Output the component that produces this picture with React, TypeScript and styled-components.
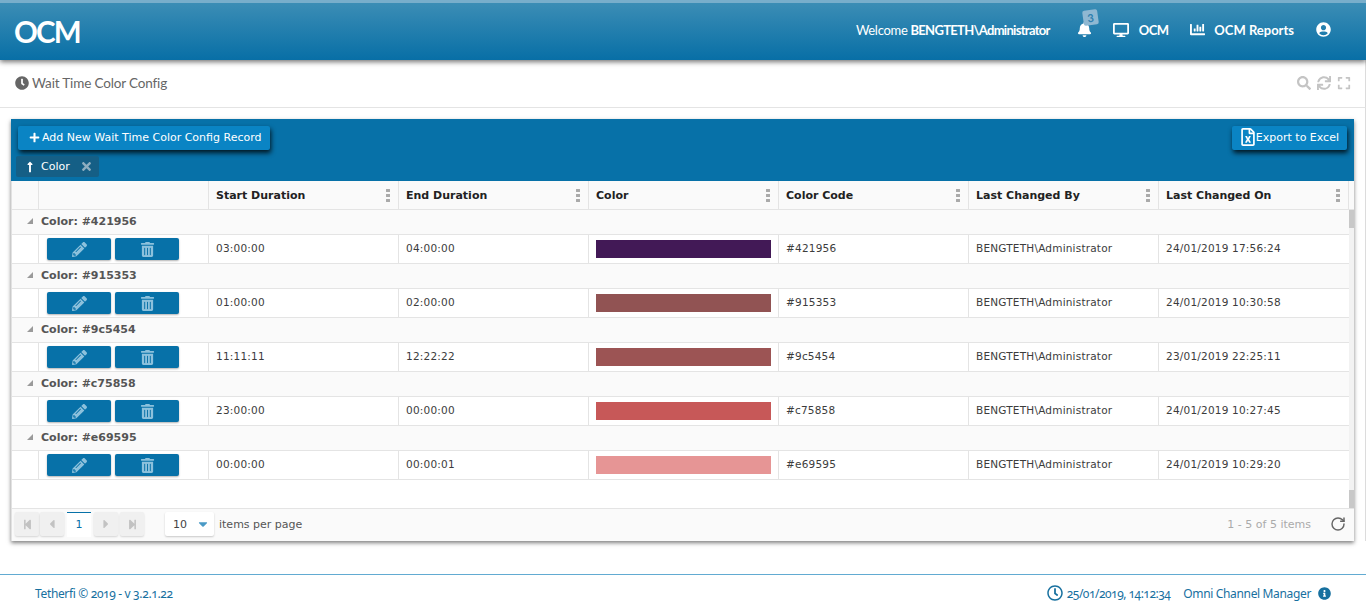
import React from 'react'
import styled, { createGlobalStyle } from 'styled-components'
import {
    FaBell, FaDesktop, FaChartBar, FaUserCircle, FaClock, FaRegClock, FaInfoCircle, FaSearch, FaSync,
    FaExpand, FaPlus, FaRegFileExcel, FaPencilAlt, FaTrashAlt, FaStepBackward, FaStepForward, FaCaretLeft,
    FaCaretRight, FaCaretDown, FaTimes, FaLongArrowAltUp
} from 'react-icons/fa'
import { RotateCw } from 'lucide-react'

const GlobalStyle = createGlobalStyle`
    html, body { margin: 0; padding: 0; background: #fff; }
    * { box-sizing: border-box; }
`

const HUMANIST = `Lato, "Open Sans", sans-serif`
const OLDSTYLE = `"Noto Sans", Lato, sans-serif`
const GRID_FONT = `"DejaVu Sans", Verdana, sans-serif`
const COLUMNS = '27px 170px 190px 190px 190px 190px 190px 1fr'

const Page = styled.div`
    width: 1366px;
    height: 613px;
    display: flex;
    flex-direction: column;
    overflow: hidden;
    position: relative;
`

const Header = styled.header`
    height: 60px;
    flex: none;
    display: flex;
    align-items: center;
    justify-content: space-between;
    padding: 3px 35px 0 14px;
    color: #fff;
    border-top: 3px solid #78aecb;
    background: linear-gradient(#3b8db5, #086fa6);
    box-shadow: 0 2px 5px rgba(0, 0, 0, 0.55);
    position: relative;
    z-index: 2;
    font-family: ${HUMANIST};
`

const Logo = styled.div`
    font-size: 29.5px;
    font-weight: 700;
    letter-spacing: -1.8px;
    margin-top: -3px;
`

const Nav = styled.nav`
    display: flex;
    align-items: center;
    font-size: 13px;
    font-weight: 700;
    margin-top: -7px;
`

const Welcome = styled.span`
    font-size: 13px;
    font-weight: 400;
    margin-right: 27px;
    letter-spacing: -0.3px;
    b { font-weight: 700; font-size: 13px; letter-spacing: -0.7px; }
`

const BellBox = styled.span`
    position: relative;
    display: inline-flex;
    margin-right: 21px;
    font-size: 15px;
`

const Badge = styled.span`
    position: absolute;
    left: 6px;
    top: -12px;
    width: 15px;
    height: 15px;
    border-radius: 2px;
    background: #8fb8d2;
    color: #2f7fae;
    font-size: 11px;
    font-weight: 700;
    display: flex;
    align-items: center;
    justify-content: center;
    transform: rotate(-8deg);
`

const NavItem = styled.span<{ $gap: number, $tight?: boolean }>`
    display: inline-flex;
    align-items: center;
    gap: ${p => p.$gap}px;
    margin-right: 22px;
    letter-spacing: ${p => p.$tight ? '-0.6px' : 'normal'};
    &:last-child { margin-right: 0; }
`

const TitleBar = styled.div`
    height: 48px;
    flex: none;
    display: flex;
    align-items: center;
    justify-content: space-between;
    padding: 0 14px 1px 15px;
    border-bottom: 1px solid #e4e4e4;
    border-right: 1px solid #dcdcdc;
`

const Title = styled.h1`
    margin: 0;
    display: flex;
    align-items: center;
    gap: 3px;
    font: 400 13.5px ${HUMANIST};
    letter-spacing: -0.15px;
    color: #666;
    svg { color: #666; font-size: 14px; }
`

const TitleTools = styled.div`
    display: flex;
    gap: 6px;
    color: #c4c4c4;
    font-size: 14px;
    align-items: center;
`

const Content = styled.main`
    flex: 1;
    padding: 11px 11px 0 11px;
    border-right: 1px solid #dcdcdc;
`

const Panel = styled.section`
    width: 1343px;
    height: 422px;
    display: flex;
    flex-direction: column;
    box-shadow: 0 2px 4px rgba(0, 0, 0, 0.5);
    border-left: 1px solid #e2e2e2;
    font-family: ${GRID_FONT};
`

const Toolbar = styled.div`
    height: 62px;
    flex: none;
    background: #0771a8;
    margin-left: -1px;
    padding: 7px 7px 0 5px;
    display: flex;
    flex-direction: column;
    gap: 6px;
`

const ToolbarRow = styled.div`
    display: flex;
    justify-content: space-between;
`

const ActionButton = styled.button`
    height: 24px;
    border: 0;
    border-radius: 2px;
    background: #0a84c4;
    color: #fff;
    font: 400 11px ${GRID_FONT};
    display: inline-flex;
    align-items: center;
    padding: 0 8px 2px 11px;
    gap: 2px;
    margin-left: 2px;
    box-shadow: 1px 3px 5px rgba(0, 0, 0, 0.8);
`

const ExportButton = styled(ActionButton)`
    padding-left: 9px;
    gap: 1px;
    svg { width: 14px; height: 18px; }
`

const GroupChip = styled.div`
    width: 83px;
    height: 21px;
    background: #155f86;
    border-radius: 2px;
    color: #fff;
    font-size: 11px;
    display: flex;
    align-items: center;
    padding: 0 6px 0 8px;
    svg:first-child { font-size: 12px; margin-right: 5px; }
    svg:last-child { margin-left: auto; color: #8faec0; font-size: 13px; }
`

const HeadRow = styled.div`
    display: grid;
    grid-template-columns: ${COLUMNS};
    height: 29px;
    flex: none;
    padding-right: 5px;
    background: #fafafa;
    border-bottom: 1px solid #e4e4e4;
`

const HeadCell = styled.div`
    display: flex;
    align-items: center;
    justify-content: space-between;
    padding: 0 7px 0 7px;
    font-size: 11px;
    font-weight: 700;
    color: #222;
    border-right: 1px solid #e4e4e4;
`

const Dots = styled.span`
    width: 4px;
    height: 14px;
    margin-right: 1px;
    background: radial-gradient(circle, #aaa 1.8px, transparent 2px) 0 0 / 4px 5px repeat-y;
`

const BodyArea = styled.div`
    flex: 1;
    display: flex;
    min-height: 0;
`

const Rows = styled.div`
    flex: 1;
    background: #fff;
`

const Scrollbar = styled.div`
    width: 5px;
    background: #f2f2f2;
    display: flex;
    flex-direction: column;
    justify-content: space-between;
`

const Thumb = styled.div`
    height: 18px;
    background: #c8c8c8;
`

const GroupRow = styled.div`
    height: 25px;
    display: flex;
    align-items: center;
    padding: 0 0 2px 15px;
    background: #fafafa;
    border-bottom: 1px solid #e4e4e4;
    font-size: 11px;
    font-weight: 700;
    color: #555;
`

const Triangle = styled.span`
    width: 0;
    height: 0;
    margin-right: 8px;
    border-style: solid;
    border-width: 0 0 6px 6px;
    border-color: transparent transparent #9a9a9a transparent;
`

const DataRow = styled.div`
    display: grid;
    grid-template-columns: ${COLUMNS};
    height: 29px;
    border-bottom: 1px solid #e4e4e4;
`

const Cell = styled.div`
    display: flex;
    align-items: center;
    padding: 0 7px 2px;
    font-size: 10.5px;
    letter-spacing: 0.2px;
    color: #3c3c3c;
    border-right: 1px solid #e4e4e4;
    &:last-child { border-right: 0; }
`

const ActionsCell = styled(Cell)`
    padding: 0 0 0 8px;
    gap: 4px;
`

const SwatchCell = styled(Cell)`
    padding-bottom: 0;
`

const RowButton = styled.button`
    width: 64px;
    height: 22px;
    border: 0;
    border-radius: 2px;
    background: #0771a8;
    color: #8cc1dc;
    font-size: 15px;
    display: flex;
    align-items: center;
    justify-content: center;
    padding: 0;
    box-shadow: 0 1px 2px rgba(0, 0, 0, 0.3);
`

const Swatch = styled.div`
    width: 175px;
    height: 18px;
`

const Pager = styled.div`
    height: 33px;
    flex: none;
    display: flex;
    align-items: center;
    background: #fafafa;
    border-top: 1px solid #e4e4e4;
    padding: 0 8px 2px 3px;
    font-size: 11px;
    color: #555;
`

const PagerButton = styled.span<{ $icon: number }>`
    width: 24px;
    height: 24px;
    margin-right: 1px;
    background: #f0f0f0;
    border-radius: 2px;
    color: #c2c2c2;
    font-size: ${p => p.$icon}px;
    display: flex;
    align-items: center;
    justify-content: center;
    box-shadow: 0 1px 2px rgba(0, 0, 0, 0.15);
`

const PagerLastButton = styled(PagerButton)`
    margin-left: 1px;
`

const PagerCurrent = styled.span`
    width: 24px;
    height: 25px;
    margin: 0 3px 0 2px;
    background: #fff;
    border-top: 1px solid #0771a8;
    color: #0771a8;
    font-size: 11px;
    display: flex;
    align-items: center;
    justify-content: center;
`

const PageSize = styled.div`
    width: 49px;
    height: 24px;
    margin: 0 5px 0 20px;
    background: #fff;
    border-radius: 2px;
    box-shadow: 0 1px 2px rgba(0, 0, 0, 0.2);
    display: flex;
    align-items: center;
    justify-content: space-between;
    padding: 0 4px 0 8px;
    color: #444;
    svg { color: #4a9ac6; font-size: 14px; }
`

const PagerInfo = styled.span`
    margin-left: auto;
    color: #aaa;
    margin-right: 19px;
`

const Refresh = styled.span`
    color: #666;
    display: flex;
`

const Footer = styled.footer`
    height: 39px;
    flex: none;
    margin-top: 33px;
    border-top: 1px solid #62abd2;
    display: flex;
    align-items: center;
    justify-content: space-between;
    padding: 0 35px 2px 35px;
    color: #17709f;
    font: 400 12px ${OLDSTYLE};
    font-feature-settings: "onum";
`

const FooterLeft = styled.span`
    letter-spacing: -0.35px;
`

const FooterRight = styled.div`
    display: flex;
    align-items: center;
    letter-spacing: -0.35px;
`

const FooterClock = styled.span`
    display: inline-flex;
    align-items: center;
    gap: 4px;
    margin-right: 13px;
    letter-spacing: -0.5px;
    svg { font-size: 16px; }
`

const FooterInfo = styled.span`
    display: inline-flex;
    margin-left: 7px;
    font-size: 13px;
`

type ColorRecord = { code: string, start: string, end: string, changedOn: string }

const records: ColorRecord[] = [
    { code: '#421956', start: '03:00:00', end: '04:00:00', changedOn: '24/01/2019 17:56:24' },
    { code: '#915353', start: '01:00:00', end: '02:00:00', changedOn: '24/01/2019 10:30:58' },
    { code: '#9c5454', start: '11:11:11', end: '12:22:22', changedOn: '23/01/2019 22:25:11' },
    { code: '#c75858', start: '23:00:00', end: '00:00:00', changedOn: '24/01/2019 10:27:45' },
    { code: '#e69595', start: '00:00:00', end: '00:00:01', changedOn: '24/01/2019 10:29:20' },
]

const columnTitles = ['Start Duration', 'End Duration', 'Color', 'Color Code', 'Last Changed By', 'Last Changed On']

const App: React.FC = () => {
    return <Page>
        <GlobalStyle />
        <Header>
            <Logo>OCM</Logo>
            <Nav>
                <Welcome>Welcome <b>BENGTETH\Administrator</b></Welcome>
                <BellBox><FaBell /><Badge>3</Badge></BellBox>
                <NavItem $gap={10} $tight><FaDesktop size={16} />OCM</NavItem>
                <NavItem $gap={9}><FaChartBar size={15} />OCM Reports</NavItem>
                <NavItem $gap={0}><FaUserCircle size={15} /></NavItem>
            </Nav>
        </Header>
        <TitleBar>
            <Title><FaClock />Wait Time Color Config</Title>
            <TitleTools><FaSearch /><FaSync /><FaExpand /></TitleTools>
        </TitleBar>
        <Content>
            <Panel>
                <Toolbar>
                    <ToolbarRow>
                        <ActionButton><FaPlus size={11} />Add New Wait Time Color Config Record</ActionButton>
                        <ExportButton><FaRegFileExcel />Export to Excel</ExportButton>
                    </ToolbarRow>
                    <GroupChip><FaLongArrowAltUp />Color<FaTimes /></GroupChip>
                </Toolbar>
                <HeadRow>
                    <HeadCell />
                    <HeadCell />
                    {columnTitles.map(title => <HeadCell key={title}>{title}<Dots /></HeadCell>)}
                </HeadRow>
                <BodyArea>
                    <Rows>
                        {records.map(record => <React.Fragment key={record.code}>
                            <GroupRow><Triangle />Color: {record.code}</GroupRow>
                            <DataRow>
                                <Cell />
                                <ActionsCell>
                                    <RowButton><FaPencilAlt /></RowButton>
                                    <RowButton><FaTrashAlt /></RowButton>
                                </ActionsCell>
                                <Cell>{record.start}</Cell>
                                <Cell>{record.end}</Cell>
                                <SwatchCell><Swatch style={{ background: record.code }} /></SwatchCell>
                                <Cell>{record.code}</Cell>
                                <Cell>BENGTETH\Administrator</Cell>
                                <Cell>{record.changedOn}</Cell>
                            </DataRow>
                        </React.Fragment>)}
                    </Rows>
                    <Scrollbar><Thumb /><Thumb /></Scrollbar>
                </BodyArea>
                <Pager>
                    <PagerButton $icon={11}><FaStepBackward /></PagerButton>
                    <PagerButton $icon={14}><FaCaretLeft /></PagerButton>
                    <PagerCurrent>1</PagerCurrent>
                    <PagerButton $icon={14}><FaCaretRight /></PagerButton>
                    <PagerLastButton $icon={11}><FaStepForward /></PagerLastButton>
                    <PageSize>10<FaCaretDown /></PageSize>
                    items per page
                    <PagerInfo>1 - 5 of 5 items</PagerInfo>
                    <Refresh><RotateCw size={16} strokeWidth={2.2} /></Refresh>
                </Pager>
            </Panel>
        </Content>
        <Footer>
            <FooterLeft>Tetherfi © 2019 - v 3.2.1.22</FooterLeft>
            <FooterRight>
                <FooterClock><FaRegClock />25/01/2019, 14:12:34</FooterClock>
                Omni Channel Manager
                <FooterInfo><FaInfoCircle /></FooterInfo>
            </FooterRight>
        </Footer>
    </Page>
}

export default App
